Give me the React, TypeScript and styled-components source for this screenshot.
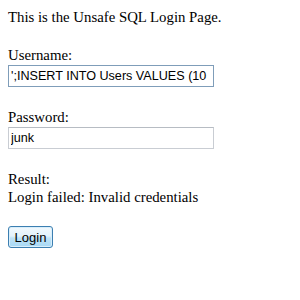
import React from "react";
import styled, { createGlobalStyle } from "styled-components";

const Global = createGlobalStyle`
  html, body { margin: 0; padding: 0; background: #ffffff; }
  body { font-family: "Liberation Serif", "Times New Roman", serif; font-size: 14.8px; color: #000; }
`;

const Page = styled.div`
  display: flex;
  flex-direction: column;
  padding: 8px;
`;

const Line = styled.div<{ $gap?: number }>`
  line-height: 18px;
  margin-top: ${(p) => p.$gap ?? 0}px;
`;

const Field = styled.div<{ $gap?: number }>`
  display: flex;
  flex-direction: column;
  align-items: flex-start;
  margin-top: ${(p) => p.$gap ?? 0}px;
`;

const Input = styled.input<{ $focus?: boolean }>`
  box-sizing: border-box;
  width: 206px;
  height: 22px;
  margin: 1px 0 0 0;
  padding: 1px 2px;
  border: 1px solid ${(p) => (p.$focus ? "#7f9db9" : "#c9cdd3")};
  border-top-color: ${(p) => (p.$focus ? "#7f9db9" : "#b7bcc3")};
  font-family: "Liberation Sans", Arial, sans-serif;
  font-size: 12.6px;
  color: #000;
  background: #fff;
  outline: none;
`;

const Button = styled.button`
  box-sizing: border-box;
  width: 45px;
  height: 22px;
  padding: 0;
  border: 1px solid #3c7fb1;
  border-radius: 3px;
  background: linear-gradient(#f2f9fd 0%, #e3f2fb 45%, #bfe2f6 55%, #a7d9f5 100%);
  box-shadow: inset 0 0 0 1px #d8eefb;
  font-family: "Liberation Sans", Arial, sans-serif;
  font-size: 13px;
  color: #000;
`;

export default function App() {
  return (
    <>
      <Global />
      <Page>
        <Line>This is the Unsafe SQL Login Page.</Line>
        <Field $gap={20}>
          <Line>Username:</Line>
          <Input $focus defaultValue="';INSERT INTO Users VALUES (10" />
        </Field>
        <Field $gap={21}>
          <Line>Password:</Line>
          <Input defaultValue="junk" />
        </Field>
        <Line $gap={21}>Result:</Line>
        <Line>Login failed: Invalid credentials</Line>
        <Field $gap={20}>
          <Button>Login</Button>
        </Field>
      </Page>
    </>
  );
}
